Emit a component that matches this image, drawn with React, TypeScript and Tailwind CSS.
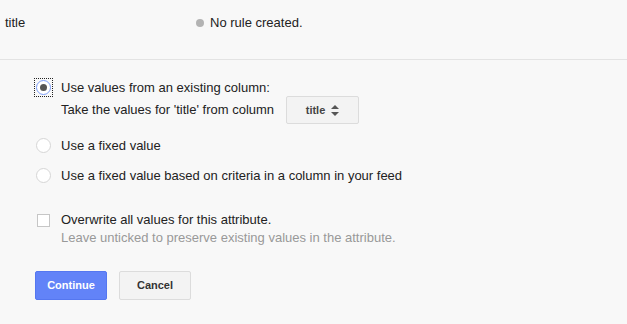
import React from 'react';

function Radio({ checked }: { checked?: boolean }) {
  if (checked) {
    return (
      <span className="flex h-[17px] w-[17px] shrink-0 items-center justify-center outline-1 outline-dotted outline-[#222]">
        <span className="flex h-[15px] w-[15px] items-center justify-center rounded-full border border-[#7b9cf7] bg-white">
          <span className="h-[7px] w-[7px] rounded-full bg-[#555]" />
        </span>
      </span>
    );
  }
  return (
    <span className="flex h-[17px] w-[17px] shrink-0 items-center justify-center">
      <span className="h-[15px] w-[15px] rounded-full border border-[#d6d6d6] bg-white" />
    </span>
  );
}

export default function App() {
  return (
    <div className="min-h-screen w-[627px] h-[324px] bg-[#f8f8f8] text-[13px] text-[#222]" style={{ fontFamily: '"Liberation Sans", Arial, sans-serif' }}>
      {/* header row */}
      <div className="flex h-[60px] items-start border-b border-[#e3e3e3] pt-[15px] leading-4">
        <div className="w-[196px] pl-[5px]">title</div>
        <div className="flex items-center gap-[6px]">
          <span className="h-[8px] w-[8px] rounded-full bg-[#b3b3b3]" />
          <span>No rule created.</span>
        </div>
      </div>

      <div className="pl-[35px] pt-[19px]">
        {/* option 1 */}
        <div className="flex gap-[9px]">
          <div>
            <Radio checked />
          </div>
          <div>
            <div className="leading-4 pt-px">Use values from an existing column:</div>
            <div className="flex items-center">
              <span className="w-[225px]">Take the values for 'title' from column</span>
              <button className="flex h-[28px] w-[73px] items-center justify-center gap-[6px] rounded-[2px] border border-[#dcdcdc] bg-[#f3f3f3] text-[11px] font-bold text-[#444]">
                title
                <svg width="8" height="11" viewBox="0 0 8 11" fill="#555">
                  <path d="M4 0 L8 4 L0 4 Z" />
                  <path d="M0 7 L8 7 L4 11 Z" />
                </svg>
              </button>
            </div>
          </div>
        </div>

        {/* option 2 */}
        <div className="mt-[13px] flex items-center gap-[9px] leading-4">
          <Radio />
          <span>Use a fixed value</span>
        </div>

        {/* option 3 */}
        <div className="mt-[13px] flex items-center gap-[9px] leading-4">
          <Radio />
          <span>Use a fixed value based on criteria in a column in your feed</span>
        </div>

        {/* overwrite */}
        <div className="mt-[27px] flex gap-[11px] leading-[18px]">
          <span className="ml-[2px] mt-[3px] h-[13px] w-[13px] shrink-0 border border-[#c6c6c6] bg-white" />
          <div>
            <div>Overwrite all values for this attribute.</div>
            <div className="text-[#999]">Leave unticked to preserve existing values in the attribute.</div>
          </div>
        </div>

        {/* buttons */}
        <div className="mt-[24px] flex gap-[12px]">
          <button className="h-[29px] w-[72px] rounded-[2px] border border-[#5577f0] bg-[#6283f8] text-[11px] font-bold text-white">
            Continue
          </button>
          <button className="h-[29px] w-[72px] rounded-[2px] border border-[#dcdcdc] bg-[#f3f3f3] text-[11px] font-bold text-[#333]">
            Cancel
          </button>
        </div>
      </div>
    </div>
  );
}
